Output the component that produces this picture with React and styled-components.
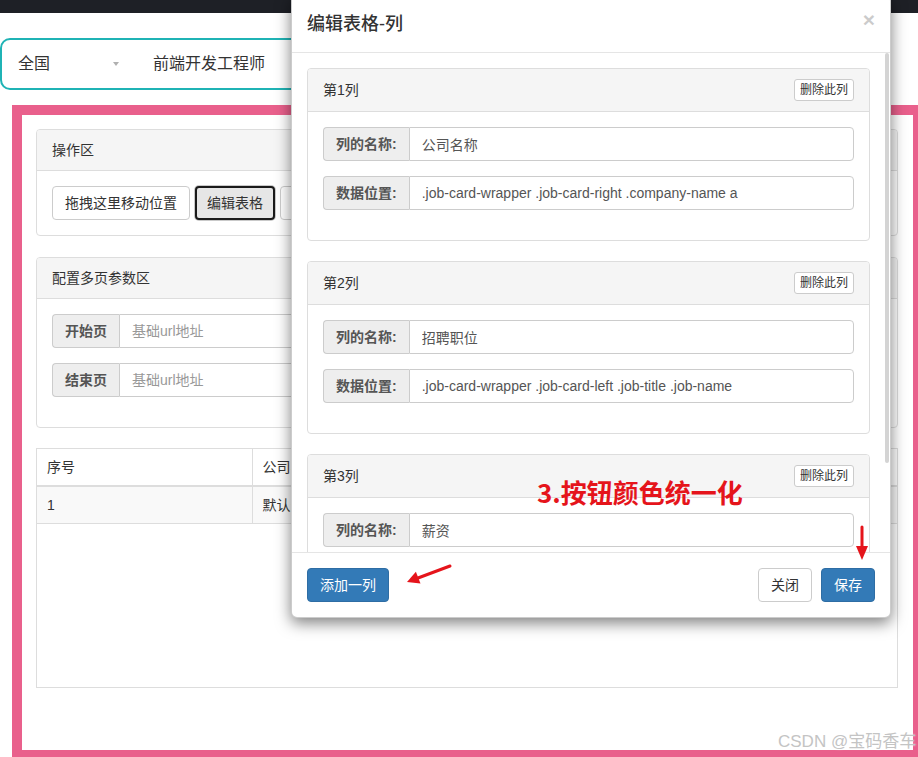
import styled, { createGlobalStyle } from "styled-components";

const GlobalStyle = createGlobalStyle`
  html, body {
    margin: 0;
    padding: 0;
    background: #fff;
    overflow: hidden;
  }
  body {
    font-family: "Liberation Sans", "Noto Sans CJK SC", sans-serif;
    font-size: 14px;
    line-height: 20px;
    color: #333;
  }
  * { box-sizing: border-box; }
`;

const columns = [
  { name: "公司名称", path: ".job-card-wrapper .job-card-right .company-name a" },
  { name: "招聘职位", path: ".job-card-wrapper .job-card-left .job-title .job-name" },
  { name: "薪资", path: ".job-card-wrapper .job-card-left .salary" },
];

const App = () => {
  return (
    <Page>
      <GlobalStyle />
      <TopBar />

      {/* 搜索条 */}
      <SearchBar>
        <CityField>
          全国
          <Caret />
        </CityField>
        <Keyword>前端开发工程师</Keyword>
      </SearchBar>

      {/* 粉色框里的配置页 */}
      <Frame>
        <Panel $gap={21}>
          <PanelHeading>操作区</PanelHeading>
          <PanelBody>
            <BtnRow>
              <Btn>拖拽这里移动位置</Btn>
              <Btn $variant="focus">编辑表格</Btn>
              <Btn>开始采集</Btn>
            </BtnRow>
          </PanelBody>
        </Panel>

        <Panel>
          <PanelHeading>配置多页参数区</PanelHeading>
          <PanelBody>
            <InputGroup>
              <Addon>开始页</Addon>
              <Field readOnly placeholder="基础url地址" />
            </InputGroup>
            <InputGroup>
              <Addon>结束页</Addon>
              <Field readOnly placeholder="基础url地址" />
            </InputGroup>
          </PanelBody>
        </Panel>

        <TableBox>
          <Table>
            <thead>
              <tr>
                <Th $first>序号</Th>
                <Th>公司名称</Th>
              </tr>
            </thead>
            <tbody>
              <tr>
                <Td $first>1</Td>
                <Td>默认公司</Td>
              </tr>
            </tbody>
          </Table>
        </TableBox>
      </Frame>

      {/* 弹窗 */}
      <Modal>
        <ModalHeader>
          <ModalTitle>编辑表格-列</ModalTitle>
          <Close>×</Close>
        </ModalHeader>
        <ModalBody>
          {columns.map((col, i) => (
            <Panel key={i}>
              <PanelHeading>
                第{i + 1}列
                <Btn $size="xs">删除此列</Btn>
              </PanelHeading>
              <PanelBody>
                <InputGroup>
                  <Addon>列的名称:</Addon>
                  <Field readOnly defaultValue={col.name} />
                </InputGroup>
                <InputGroup>
                  <Addon>数据位置:</Addon>
                  <Field readOnly defaultValue={col.path} />
                </InputGroup>
              </PanelBody>
            </Panel>
          ))}
        </ModalBody>
        <ScrollThumb />
        <ModalFooter>
          <Btn $variant="primary">添加一列</Btn>
          <FooterRight>
            <Btn>关闭</Btn>
            <Btn $variant="primary">保存</Btn>
          </FooterRight>
        </ModalFooter>
      </Modal>

      {/* 标注 */}
      <Note>3.按钮颜色统一化</Note>
      <ArrowSvg $left={400} $top={558} width="56" height="30" viewBox="0 0 56 30">
        <line x1="50" y1="8" x2="18" y2="20" stroke="#e5141b" strokeWidth="3" strokeLinecap="round" />
        <polygon points="7,24 20.5,25.6 15.9,13.8" fill="#e5141b" />
      </ArrowSvg>
      <ArrowSvg $left={854} $top={524} width="16" height="40" viewBox="0 0 16 40">
        <line x1="8" y1="3" x2="8" y2="24" stroke="#e5141b" strokeWidth="3" strokeLinecap="round" />
        <polygon points="2,22 14,22 8,36" fill="#e5141b" />
      </ArrowSvg>

      <Watermark>CSDN @宝码香车</Watermark>
    </Page>
  );
};

const Page = styled.div`
  position: relative;
  width: 918px;
  height: 757px;
  overflow: hidden;
  background: #fff;
`;

const TopBar = styled.div`
  height: 13px;
  background: #1e2026;
`;

const SearchBar = styled.div`
  display: flex;
  align-items: center;
  margin-top: 25px;
  width: 760px;
  height: 52px;
  border: 2px solid #1fb3b5;
  border-radius: 10px;
  font-size: 16px;
  color: #333;
`;
const CityField = styled.div`
  display: flex;
  align-items: center;
  justify-content: space-between;
  width: 133px;
  padding: 0 16px;
`;
const Caret = styled.span`
  width: 0;
  height: 0;
  border-left: 3px solid transparent;
  border-right: 3px solid transparent;
  border-top: 4px solid #b0b0b0;
`;
const Keyword = styled.div`
  padding-left: 18px;
`;

const Frame = styled.div`
  margin: 15px 0 0 12px;
  width: 911px;
  height: 655px;
  border: 10px solid #e9608c;
  padding: 14px 15px 0 14px;
  background: #fff;
`;

const Panel = styled.div`
  border: 1px solid #ddd;
  border-radius: 4px;
  background: #fff;
  margin-bottom: ${(p) => p.$gap ?? 20}px;
`;
const PanelHeading = styled.div`
  display: flex;
  align-items: center;
  justify-content: space-between;
  padding: 10px 15px;
  background: #f5f5f5;
  border-bottom: 1px solid #ddd;
  border-radius: 3px 3px 0 0;
  color: #333;
`;
const PanelBody = styled.div`
  padding: 15px;
`;

const BtnRow = styled.div`
  display: flex;
  gap: 5px;
`;

const Btn = styled.button`
  font-family: inherit;
  font-size: ${(p) => (p.$size === "xs" ? 12 : 14)}px;
  line-height: ${(p) => (p.$size === "xs" ? 18 : 20)}px;
  padding: ${(p) => (p.$size === "xs" ? "1px 5px" : p.$variant === "focus" ? "5px 10px" : "6px 12px")};
  border-radius: ${(p) => (p.$size === "xs" ? 3 : 4)}px;
  white-space: nowrap;
  cursor: pointer;
  ${(p) =>
    p.$variant === "primary"
      ? `background: #337ab7; border: 1px solid #2e6da4; color: #fff;`
      : p.$variant === "focus"
      ? `background: #e6e6e6; border: 2px solid #1a1a1a; color: #333; box-shadow: 0 0 0 1px #c9c9c9;`
      : `background: #fff; border: 1px solid #ccc; color: #333;`}
`;

const InputGroup = styled.div`
  display: flex;
  height: 34px;
  margin-bottom: 15px;
`;
const Addon = styled.span`
  display: flex;
  align-items: center;
  padding: 6px 12px;
  background: #eee;
  border: 1px solid #ccc;
  border-right: 0;
  border-radius: 4px 0 0 4px;
  color: #555;
  font-weight: bold;
  white-space: nowrap;
`;
const Field = styled.input`
  flex: 1;
  min-width: 0;
  height: 34px;
  padding: 6px 12px;
  border: 1px solid #ccc;
  border-radius: 0 4px 4px 0;
  font-family: inherit;
  font-size: 14px;
  color: #555;
  background: #fff;
  outline: none;
  &::placeholder {
    color: #999;
  }
`;

const TableBox = styled.div`
  height: 240px;
  border: 1px solid #ddd;
`;
const Table = styled.table`
  width: 100%;
  border-collapse: collapse;
`;
const Th = styled.th`
  text-align: left;
  font-weight: normal;
  padding: 8px 10px;
  line-height: 20px;
  border-bottom: 2px solid #ddd;
  width: ${(p) => (p.$first ? "215px" : "auto")};
  border-right: ${(p) => (p.$first ? "1px solid #ddd" : "0")};
  white-space: nowrap;
`;
const Td = styled.td`
  padding: 8px 10px;
  line-height: 20px;
  background: #f9f9f9;
  border-bottom: 1px solid #ddd;
  border-right: ${(p) => (p.$first ? "1px solid #ddd" : "0")};
  white-space: nowrap;
`;

const Modal = styled.div`
  position: absolute;
  top: -5px;
  left: 291px;
  width: 600px;
  background: #fff;
  border: 1px solid rgba(0, 0, 0, 0.2);
  border-radius: 6px;
  box-shadow: 0 5px 15px rgba(0, 0, 0, 0.5);
`;
const ModalHeader = styled.div`
  display: flex;
  justify-content: space-between;
  align-items: flex-start;
  padding: 15px;
  border-bottom: 1px solid #e5e5e5;
`;
const ModalTitle = styled.h4`
  margin: 0;
  font-size: 18px;
  font-weight: 500;
  line-height: 26px;
  color: #333;
`;
const Close = styled.button`
  margin-top: -2px;
  padding: 0;
  background: none;
  border: 0;
  font-family: "Liberation Sans", sans-serif;
  font-size: 21px;
  font-weight: bold;
  line-height: 1;
  color: #000;
  opacity: 0.2;
`;
const ModalBody = styled.div`
  height: 499px;
  overflow: hidden;
  padding: 15px 20px 15px 15px;
`;
// 滚动条滑块（盖在弹窗内容右侧）
const ScrollThumb = styled.div`
  position: absolute;
  top: 57px;
  right: 1px;
  width: 4px;
  height: 410px;
  border-radius: 2px;
  background: #d4d4d4;
`;
const ModalFooter = styled.div`
  display: flex;
  justify-content: space-between;
  padding: 15px;
  border-top: 1px solid #e5e5e5;
`;
const FooterRight = styled.div`
  display: flex;
  gap: 9px;
`;

const Note = styled.div`
  position: absolute;
  left: 537px;
  top: 479px;
  font-family: "Noto Sans CJK SC", sans-serif;
  font-size: 26px;
  font-weight: bold;
  line-height: 1;
  color: #e5141b;
  white-space: nowrap;
`;

const ArrowSvg = styled.svg`
  position: absolute;
  left: ${(p) => p.$left}px;
  top: ${(p) => p.$top}px;
`;

const Watermark = styled.div`
  position: absolute;
  left: 778px;
  top: 733px;
  font-size: 17px;
  line-height: 1;
  color: #c4c4c4;
  text-shadow: 0 0 2px #fff;
  white-space: nowrap;
`;

export default App;
